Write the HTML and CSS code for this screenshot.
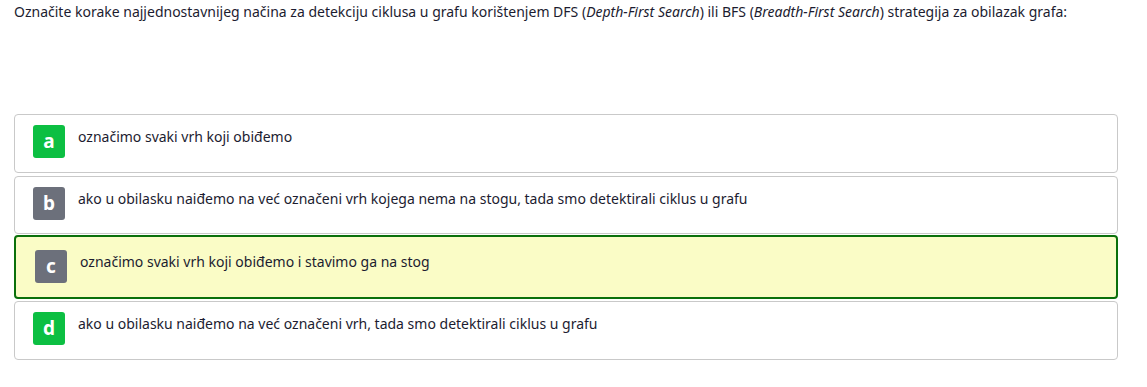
FILE: index.html
```html
<!DOCTYPE html>
<html lang="hr">
<head>
  <meta charset="UTF-8">
  <title>Pitanje</title>
  <link rel="stylesheet" href="styles.css">
</head>
<body>

<div class="question">
  <p class="prompt">Označite korake najjednostavnijeg načina za detekciju ciklusa u grafu korištenjem DFS (<em>Depth-First Search</em>) ili BFS (<em>Breadth-First Search</em>) strategija za obilazak grafa:</p>

  <div class="options">
    <div class="option">
      <span class="badge correct">a</span>
      <span class="text">označimo svaki vrh koji obiđemo</span>
    </div>
    <div class="option">
      <span class="badge">b</span>
      <span class="text">ako u obilasku naiđemo na već označeni vrh kojega nema na stogu, tada smo detektirali ciklus u grafu</span>
    </div>
    <div class="option selected">
      <span class="badge">c</span>
      <span class="text">označimo svaki vrh koji obiđemo i stavimo ga na stog</span>
    </div>
    <div class="option">
      <span class="badge correct">d</span>
      <span class="text">ako u obilasku naiđemo na već označeni vrh, tada smo detektirali ciklus u grafu</span>
    </div>
  </div>
</div>

</body>
</html>
```

FILE: styles.css
```css
body {
  font-family: 'Noto Sans', 'Open Sans', sans-serif;
  background-color: #fff;
  color: #1c1c30;
  margin: 0;
  padding: 0 29px 0 14px;
}

.prompt {
  font-size: 14px;
  line-height: 20px;
  margin: 0;
  padding-top: 2px;
}

.options {
  margin-top: 92px;
  display: flex;
  flex-direction: column;
  gap: 3px;
}

.option {
  display: flex;
  align-items: flex-start;
  gap: 13px;
  border: 1px solid #c9c9c9;
  border-radius: 4px;
  padding: 10px 18px 13.5px;
  font-size: 14px;
  line-height: 20px;
}

.option.selected {
  border: 2px solid #0b700b;
  background-color: #fafcc6;
  padding: 13px 19px 14px;
  margin: -2px 0 -1px;
}

.badge {
  flex: none;
  width: 32px;
  height: 33px;
  border-radius: 3px;
  background-color: #6c707b;
  color: #fff;
  font-weight: bold;
  font-size: 19px;
  line-height: 32px;
  text-align: center;
}

.badge.correct {
  background-color: #0cbf42;
}

.text {
  padding-top: 2px;
}
```
